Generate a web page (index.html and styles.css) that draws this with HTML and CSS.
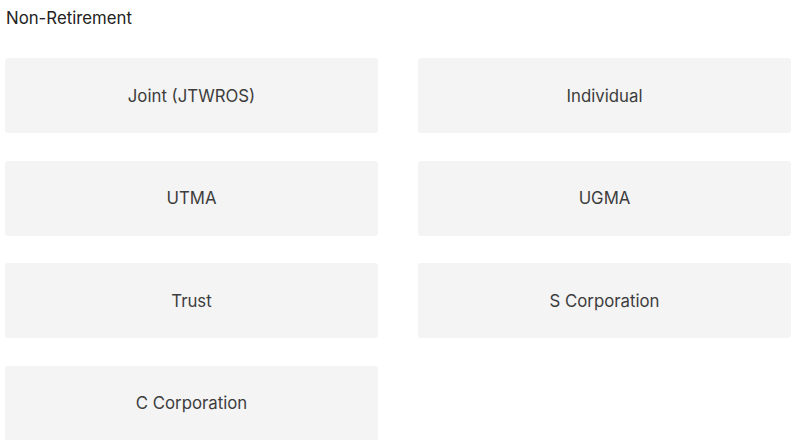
FILE: index.html
```html
<!DOCTYPE html>
<html lang="en">
<head>
  <meta charset="UTF-8">
  <meta name="viewport" content="width=device-width, initial-scale=1.0">
  <title>Account Types</title>

  <link rel="stylesheet" href="styles.css">
</head>
<body>
  <div class="account-types">
    <h2>Non-Retirement</h2>

    <div class="type-grid">
      <button class="type-card">Joint (JTWROS)</button>
      <button class="type-card">Individual</button>
      <button class="type-card">UTMA</button>
      <button class="type-card">UGMA</button>
      <button class="type-card">Trust</button>
      <button class="type-card">S Corporation</button>
      <button class="type-card">C Corporation</button>
    </div>
  </div>
</body>
</html>
```

FILE: styles.css
```css
body {
  font-family: Inter, "Noto Sans", sans-serif;
  margin: 0;
  background-color: #fff;
  color: #333;
}

.account-types {
  padding: 0 9px 0 5px;
}

h2 {
  font-size: 16.8px;
  font-weight: 400;
  line-height: 20px;
  margin: 0;
  padding: 8px 0 30px 1px;
  color: #222;
}

.type-grid {
  display: grid;
  grid-template-columns: 1fr 1fr;
  column-gap: 40px;
  row-gap: 27.5px;
}

.type-card {
  height: 75px;
  border: none;
  border-radius: 3px;
  background-color: #f4f4f4;
  font-family: inherit;
  font-size: 16.8px;
  color: #3d3d3d;
  cursor: pointer;
}

.type-card:hover {
  background-color: #ececec;
}
```
